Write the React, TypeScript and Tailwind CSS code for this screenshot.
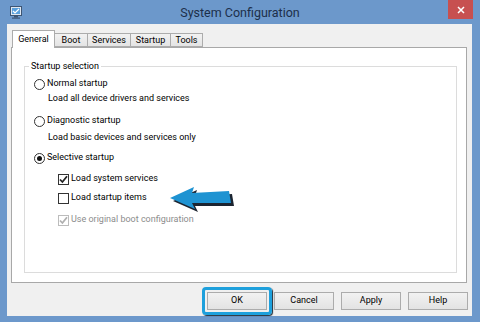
import React from "react";

const font = { fontFamily: 'Roboto, "Noto Sans", sans-serif' };

function Radio({ checked }: { checked?: boolean }) {
  return (
    <span className="w-[11px] h-[11px] rounded-full border border-[#333] bg-white flex items-center justify-center shrink-0">
      {checked && <span className="w-[5px] h-[5px] rounded-full bg-[#111]" />}
    </span>
  );
}

function Check({ checked, disabled }: { checked?: boolean; disabled?: boolean }) {
  const col = disabled ? "#b0b0b0" : "#222";
  return (
    <span
      className={
        "w-[11px] h-[11px] border bg-white flex items-center justify-center shrink-0 " +
        (disabled ? "border-[#bcbcbc]" : "border-[#333]")
      }
    >
      {checked && (
        <svg width="9" height="9" viewBox="0 0 9 9">
          <path d="M1 4.5 L3.4 7 L8 1.2" fill="none" stroke={col} strokeWidth="1.8" />
        </svg>
      )}
    </span>
  );
}

function Tab({ label, w, active }: { label: string; w: string; active?: boolean }) {
  if (active)
    return (
      <div
        className={
          w +
          " h-[18px] bg-white border border-b-0 border-[#acacac] flex items-center justify-center relative z-10 -mb-[1px]"
        }
      >
        {label}
      </div>
    );
  return (
    <div
      className={
        w +
        " h-[14px] mt-[3px] bg-gradient-to-b from-[#f2f2f2] to-[#e4e4e4] border border-l-0 border-[#acacac] flex items-center justify-center"
      }
    >
      {label}
    </div>
  );
}

function Btn({ label }: { label: string }) {
  return (
    <div className="w-[60px] h-[18px] border border-[#acacac] bg-gradient-to-b from-[#f2f2f2] to-[#e3e3e3] flex items-center justify-center text-[9px] text-black">
      {label}
    </div>
  );
}

export default function App() {
  return (
    <div
      className="w-[480px] h-[322px] bg-[#6c98cb] flex flex-col relative overflow-hidden text-black"
      style={font}
    >
      {/* Title bar */}
      <div className="h-[24px] grid grid-cols-[80px_1fr_80px] shrink-0">
        <div className="pl-[10px] pt-[6px]">
          <svg width="12" height="13" viewBox="0 0 12 13">
            <rect x="0.5" y="0.5" width="11" height="9" fill="#dfe8f2" stroke="#3d5573" />
            <rect x="2" y="2" width="8" height="6" fill="#5aa0dc" />
            <path d="M3 5 L5 7 L9 3" fill="none" stroke="#fff" strokeWidth="1.2" />
            <rect x="4" y="10" width="4" height="1.5" fill="#3d5573" />
            <rect x="2" y="11.5" width="8" height="1.2" fill="#3d5573" />
          </svg>
        </div>
        <div className="text-center text-[12.5px] leading-[25px] text-[#1c2f4a]">System Configuration</div>
        <div className="flex justify-end pr-[7px]">
          <div className="w-[25px] h-[19px] bg-[#c75050] flex items-center justify-center">
            <svg width="8" height="8" viewBox="0 0 8 8">
              <path d="M1 1 L7 7 M7 1 L1 7" stroke="#fff" strokeWidth="1.5" />
            </svg>
          </div>
        </div>
      </div>

      {/* Body */}
      <div className="ml-[7px] mr-[8px] h-[292px] bg-[#f0f0f0] flex flex-col">
        {/* Tabs */}
        <div className="pt-[6px] pl-[5px] flex items-start text-[9px] leading-none">
          <Tab label="General" w="w-[43px]" active />
          <Tab label="Boot" w="w-[33px]" />
          <Tab label="Services" w="w-[43px]" />
          <Tab label="Startup" w="w-[40px]" />
          <Tab label="Tools" w="w-[32px]" />
        </div>

        {/* Panel */}
        <div className="ml-[4px] mr-[5px] h-[236px] bg-white border border-[#a8a8a8] flex flex-col pt-[11px] pl-[12px] pr-[9px] pb-[9px]">
          <fieldset className="flex-1 border border-[#dcdcdc] text-[9px] flex flex-col">
            <legend className="ml-[4px] px-[2px] leading-[14px]">Startup selection</legend>
            <div className="mt-[4px] h-[14px] pl-[9px] flex items-center gap-[2px]">
              <Radio />
              <span>Normal startup</span>
            </div>
            <div className="mt-[1px] h-[14px] pl-[23px] flex items-center">Load all device drivers and services</div>
            <div className="mt-[8px] h-[14px] pl-[9px] flex items-center gap-[2px]">
              <Radio />
              <span>Diagnostic startup</span>
            </div>
            <div className="mt-[3px] h-[14px] pl-[23px] flex items-center">Load basic devices and services only</div>
            <div className="mt-[6px] h-[14px] pl-[9px] flex items-center gap-[2px]">
              <Radio checked />
              <span>Selective startup</span>
            </div>
            <div className="mt-[7px] h-[14px] pl-[33px] flex items-center gap-[2px]">
              <Check checked />
              <span>Load system services</span>
            </div>
            <div className="mt-[5px] h-[14px] pl-[33px] flex items-center gap-[2px]">
              <Check />
              <span>Load startup items</span>
            </div>
            <div className="mt-[8px] h-[14px] pl-[33px] flex items-center gap-[2px] text-[#8c8c8c]">
              <Check checked disabled />
              <span>Use original boot configuration</span>
            </div>
          </fieldset>
        </div>

        {/* Buttons */}
        <div className="pt-[9px] pr-[4px] flex justify-end gap-[7px]">
          <div className="relative">
            <Btn label="OK" />
            <div className="absolute -left-[5px] -top-[5px] -right-[5px] -bottom-[5px] rounded-[4px] border-[3px] border-[#1ea0dc] shadow-[1px_1px_1px_#1d2a36]" />
          </div>
          <Btn label="Cancel" />
          <Btn label="Apply" />
          <Btn label="Help" />
        </div>
      </div>

      {/* Annotation arrow */}
      <svg className="absolute left-[165px] top-[183px]" width="75" height="32" viewBox="0 0 75 32">
        <path d="M6 16 L30 5 L28 11 L65 9 L67 21 L28 21 L31 27 Z" fill="#1c2430" transform="translate(2 2)" />
        <path d="M5 15 L29 4 L27 10 L64 8 L66 20 L27 20 L30 26 Z" fill="#1e93d2" />
      </svg>
    </div>
  );
}
